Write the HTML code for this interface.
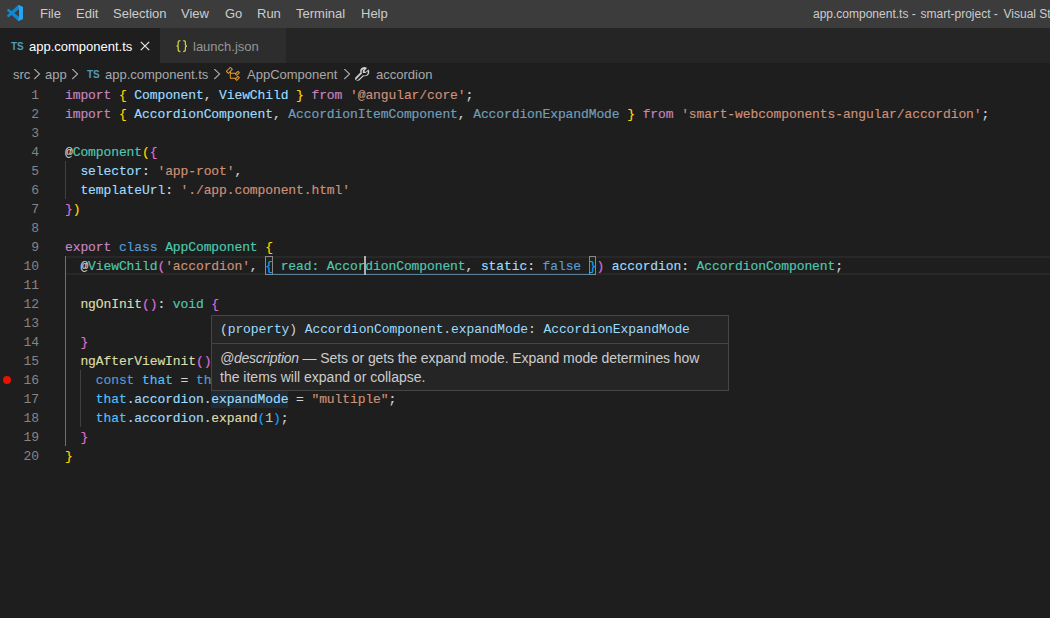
<!DOCTYPE html>
<html><head><meta charset="utf-8">
<style>
*{margin:0;padding:0;box-sizing:border-box}
html,body{width:1050px;height:618px;overflow:hidden;background:#1e1e1e}
body{position:relative;font-family:"Liberation Sans",sans-serif}
#title{position:absolute;left:0;top:0;width:1050px;height:28px;background:#3c3c3c}
.menu{position:absolute;top:0;height:28px;line-height:28px;font-size:13px;color:#cccccc;white-space:pre}
#tabs{position:absolute;left:0;top:28px;width:1050px;height:35px;background:#252526}
#tab1{position:absolute;left:0;top:0;width:160px;height:35px;background:#1e1e1e}
#tab2{position:absolute;left:160px;top:0;width:126px;height:35px;background:#2d2d2d}
.ui{font-size:13px;white-space:pre;position:absolute;line-height:16px}
#crumbs{position:absolute;left:0;top:63px;width:1050px;height:22px}
.ln{position:absolute;left:0;width:39px;text-align:right;font-family:"Liberation Mono",monospace;font-size:13px;color:#858585;height:19px;line-height:19px}
.cl{position:absolute;left:65px;-webkit-text-stroke:0.15px currentColor;font-family:"Liberation Mono",monospace;font-size:13px;letter-spacing:-0.1px;color:#d4d4d4;height:19px;line-height:19px;white-space:pre}
.act{color:#c6c6c6}
.k{color:#c586c0}.b{color:#569cd6}.v{color:#9cdcfe}.t{color:#4ec9b0}.s{color:#ce9178}.f{color:#dcdcaa}
.y{color:#ffd700}.p{color:#da70d6}.u{color:#179fff}.n{color:#b5cea8}.c{color:#4fc1ff}
.vd{color:#9cdcfe;opacity:.67}
.guide{position:absolute;width:1px;background:#404040}
.box{position:absolute}
#hover{position:absolute;left:211px;top:315px;width:518px;height:76px;background:#252526;border:1px solid #454545}
#hover .hd{position:absolute;left:8px;top:0;height:27px;line-height:27px;font-family:"Liberation Mono",monospace;font-size:13px;letter-spacing:-0.1px;color:#d4d4d4;white-space:pre}
#hover .sep{position:absolute;left:0;top:27px;width:516px;height:1px;background:#454545}
#hover .ds{position:absolute;left:8px;top:33px;font-size:14px;line-height:19px;color:#cccccc;white-space:pre}
</style></head>
<body>
<div id="title">
  <svg style="position:absolute;left:7px;top:5px" width="16" height="16" viewBox="0 0 100 100">
    <path fill="#0f87d3" d="M96.46 10.8L75.86.87a6.23 6.23 0 0 0-7.1 1.21L29.35 38.04 12.17 25.01a4.16 4.16 0 0 0-5.32.24L1.34 30.26a4.17 4.17 0 0 0 0 6.16L16.24 50 1.33 63.58a4.17 4.17 0 0 0 0 6.160l5.51 5.01a4.16 4.16 0 0 0 5.32.24l17.19-13.04 39.41 35.96a6.22 6.22 0 0 0 7.1 1.21l20.6-9.93A6.25 6.25 0 0 0 100 83.76V16.24a6.25 6.25 0 0 0-3.54-5.44zM75.010 72.7L45.1 50l29.91-22.7v45.4z"/>
    <path fill="#25a5f0" d="M75.86.87L96.46 10.8A6.25 6.25 0 0 1 100 16.24V83.76A6.25 6.25 0 0 1 96.46 89.2L75.86 99.13A6.22 6.22 0 0 1 70 98.5L75.01 72.7V27.3L70 1.5A6.23 6.23 0 0 1 75.86.87z"/>
  </svg>
  <div class="menu" style="left:40px">File</div>
  <div class="menu" style="left:76px">Edit</div>
  <div class="menu" style="left:113px">Selection</div>
  <div class="menu" style="left:181px">View</div>
  <div class="menu" style="left:225px">Go</div>
  <div class="menu" style="left:257px">Run</div>
  <div class="menu" style="left:296px">Terminal</div>
  <div class="menu" style="left:361px">Help</div>
  <div class="menu" style="left:813px;font-size:12px">app.component.ts -</div><div class="menu" style="left:920.5px;font-size:12px">smart-project -</div><div class="menu" style="left:1003.5px;font-size:12px">Visual Studio Code</div>
</div>
<div id="tabs">
  <div id="tab1">
    <div class="ui" style="left:11px;top:13px;font-size:10px;font-weight:bold;color:#519aba;line-height:12px">TS</div>
    <div class="ui" style="left:29px;top:11px;color:#ffffff">app.component.ts</div>
    <svg style="position:absolute;left:140px;top:13px" width="10" height="10" viewBox="0 0 10 10"><path d="M0.8 0.8L9.2 9.2M9.2 0.8L0.8 9.2" stroke="#e8e8e8" stroke-width="1.2"/></svg>
  </div>
  <div id="tab2">
    <svg style="position:absolute;left:15px;top:11px" width="14" height="14" viewBox="0 0 14 14"><path d="M5.4 1.6 Q3.2 1.6 3.2 3.4 V5.8 Q3.2 7 1.6 7 Q3.2 7 3.2 8.2 V10.8 Q3.2 12.6 5.4 12.6 M8.2 1.6 Q10.4 1.6 10.4 3.4 V5.8 Q10.4 7 12 7 Q10.4 7 10.4 8.2 V10.8 Q10.4 12.6 8.2 12.6" stroke="#cbcb41" stroke-width="1.3" fill="none"/></svg>
    <div class="ui" style="left:33px;top:11px;color:#969696">launch.json</div>
  </div>
</div>
<div id="crumbs">
  <div class="ui" style="left:13px;top:4px;color:#a9a9a9">src</div>
  <svg style="position:absolute;left:33px;top:6px" width="9" height="11" viewBox="0 0 9 11"><path d="M1.3 0L6.6 5L1.3 10" stroke="#a9a9a9" stroke-width="1.1" fill="none"/></svg>
  <div class="ui" style="left:45px;top:4px;color:#a9a9a9">app</div>
  <svg style="position:absolute;left:71px;top:6px" width="9" height="11" viewBox="0 0 9 11"><path d="M1.3 0L6.6 5L1.3 10" stroke="#a9a9a9" stroke-width="1.1" fill="none"/></svg>
  <div class="ui" style="left:87px;top:6px;font-size:10px;font-weight:bold;color:#519aba;line-height:12px">TS</div>
  <div class="ui" style="left:105px;top:4px;color:#a9a9a9">app.component.ts</div>
  <svg style="position:absolute;left:213px;top:6px" width="9" height="11" viewBox="0 0 9 11"><path d="M1.3 0L6.6 5L1.3 10" stroke="#a9a9a9" stroke-width="1.1" fill="none"/></svg>
  <svg style="position:absolute;left:225px;top:3px" width="16" height="16" viewBox="0 0 16 16"><path fill="#ee9d28" d="M11.34 9.71h.71l2.67-2.67v-.71L13.38 5h-.7l-1.82 1.81h-5V5.56l1.86-1.85V3l-2-2H5L1 5v.71l2 2h.71l1.14-1.15v5.79l.5.5H10v.52l1.33 1.34h.71l2.67-2.67v-.71L13.37 10h-.7l-1.86 1.85h-5v-4H10v.48l1.34 1.38zm1.69-3.65l.63.63-2 2-.63-.63 2-2zm0 5l.63.63-2 2-.63-.63 2-2zM3.35 6.65l-1.29-1.3 3.29-3.29 1.3 1.29-3.3 3.3z"/></svg>
  <div class="ui" style="left:247px;top:4px;color:#a9a9a9">AppComponent</div>
  <svg style="position:absolute;left:343px;top:6px" width="9" height="11" viewBox="0 0 9 11"><path d="M1.3 0L6.6 5L1.3 10" stroke="#a9a9a9" stroke-width="1.1" fill="none"/></svg>
  <svg style="position:absolute;left:354.3px;top:2.6px" width="15.4" height="15.4" viewBox="0 0 16 16"><path fill="#d0d0d0" d="M2.807 14.975a1.75 1.75 0 0 1-1.255-.556 1.684 1.684 0 0 1-.544-1.1A1.72 1.72 0 0 1 1.36 12.1c1.208-1.27 3.587-3.65 5.318-5.345a4.257 4.257 0 0 1 .026-3.026 4.034 4.034 0 0 1 1.665-1.94 4.32 4.32 0 0 1 2.511-.7 3.9 3.9 0 0 1 2.207.753l.5.341-2.5 2.578v1.242h1.242l2.563-2.489.337.485a3.762 3.762 0 0 1 .679 2.161 4.266 4.266 0 0 1-.678 2.445 4.04 4.04 0 0 1-1.908 1.626 4.376 4.376 0 0 1-1.654.319 4.19 4.19 0 0 1-1.376-.233c-2.111 2.01-4.4 4.163-5.216 4.88a1.69 1.69 0 0 1-1.055.4zM11.1 3.025a3.223 3.223 0 0 0-1.762.5 2.961 2.961 0 0 0-1.23 1.443 3.233 3.233 0 0 0 .1 2.49l.124.3-.232.226c-1.723 1.684-4.257 4.2-5.513 5.521a.709.709 0 0 0-.2.564.908.908 0 0 0 .278.552c.256.256.818.484 1.1.23.742-.655 2.888-2.665 5.547-5.2l.228-.217.3.127a3.3 3.3 0 0 0 2.529.046 3.04 3.04 0 0 0 1.44-1.221 3.2 3.2 0 0 0 .52-1.82 2.744 2.744 0 0 0-.2-1.072L11.762 7.33H9.094V4.662l2.119-2.185a2.9 2.9 0 0 0-.113-.002z"/></svg>
  <div class="ui" style="left:376px;top:4px;color:#a9a9a9">accordion</div>
</div>
<!-- current line highlight line 10 -->
<div class="box" style="left:65px;top:256px;width:985px;height:19px;border-top:2px solid #282828;border-bottom:2px solid #282828"></div>
<!-- hover highlight expandMode -->
<div class="box" style="left:211px;top:389px;width:77px;height:19px;background:#264f7840"></div>
<!-- indent guides -->
<div class="guide" style="left:65px;top:161px;height:38px"></div>
<div class="guide" style="left:65px;top:256px;height:190px;background:#707070"></div>
<div class="guide" style="left:80px;top:370px;height:57px"></div>
<!-- bracket match boxes -->
<div class="box" style="left:265px;top:256px;width:8px;height:19px;border:1px solid #888888;background:#0064001a"></div>
<div class="box" style="left:589px;top:256px;width:7px;height:19px;border:1px solid #888888;background:#0064001a"></div>
<div class="box" style="left:273px;top:274px;width:316px;height:1px;background:#5b8098"></div>
<!-- breakpoint -->
<div class="box" style="left:2.7px;top:375.7px;width:8.5px;height:8.5px;border-radius:50%;background:#e51400"></div>
<div class="ln" style="top:86px">1</div>
<div class="cl" style="top:86px"><span class="k">import</span> <span class="y">{</span> <span class="v">Component</span>, <span class="v">ViewChild</span> <span class="y">}</span> <span class="k">from</span> <span class="s">&#x27;@angular/core&#x27;</span>;</div>
<div class="ln" style="top:105px">2</div>
<div class="cl" style="top:105px"><span class="k">import</span> <span class="y">{</span> <span class="v">AccordionComponent</span>, <span class="vd">AccordionItemComponent</span>, <span class="vd">AccordionExpandMode</span> <span class="y">}</span> <span class="k">from</span> <span class="s">&#x27;smart-webcomponents-angular/accordion&#x27;</span>;</div>
<div class="ln" style="top:124px">3</div>
<div class="cl" style="top:124px"></div>
<div class="ln" style="top:143px">4</div>
<div class="cl" style="top:143px">@<span class="t">Component</span><span class="y">(</span><span class="p">{</span></div>
<div class="ln" style="top:162px">5</div>
<div class="cl" style="top:162px">  <span class="v">selector</span>: <span class="s">&#x27;app-root&#x27;</span>,</div>
<div class="ln" style="top:181px">6</div>
<div class="cl" style="top:181px">  <span class="v">templateUrl</span>: <span class="s">&#x27;./app.component.html&#x27;</span></div>
<div class="ln" style="top:200px">7</div>
<div class="cl" style="top:200px"><span class="p">}</span><span class="y">)</span></div>
<div class="ln" style="top:219px">8</div>
<div class="cl" style="top:219px"></div>
<div class="ln" style="top:238px">9</div>
<div class="cl" style="top:238px"><span class="k">export</span> <span class="b">class</span> <span class="t">AppComponent</span> <span class="y">{</span></div>
<div class="ln" style="top:257px">10</div>
<div class="cl" style="top:257px">  @<span class="t">ViewChild</span><span class="p">(</span><span class="s">&#x27;accordion&#x27;</span>, <span class="u">{</span> <span class="t">read: AccordionComponent</span>, <span class="v">static</span>: <span class="b">false</span> <span class="u">}</span><span class="p">)</span> <span class="v">accordion</span>: <span class="t">AccordionComponent</span>;</div>
<div class="ln" style="top:276px">11</div>
<div class="cl" style="top:276px"></div>
<div class="ln" style="top:295px">12</div>
<div class="cl" style="top:295px">  <span class="f">ngOnInit</span><span class="p">()</span>: <span class="t">void</span> <span class="p">{</span></div>
<div class="ln" style="top:314px">13</div>
<div class="cl" style="top:314px"></div>
<div class="ln" style="top:333px">14</div>
<div class="cl" style="top:333px">  <span class="p">}</span></div>
<div class="ln" style="top:352px">15</div>
<div class="cl" style="top:352px">  <span class="f">ngAfterViewInit</span><span class="p">()</span> <span class="p">{</span></div>
<div class="ln" style="top:371px">16</div>
<div class="cl" style="top:371px">    <span class="b">const</span> <span class="c">that</span> = <span class="b">this</span>;</div>
<div class="ln" style="top:390px">17</div>
<div class="cl" style="top:390px">    <span class="c">that</span>.<span class="v">accordion</span>.<span class="v">expandMode</span> = <span class="s">&quot;multiple&quot;</span>;</div>
<div class="ln" style="top:409px">18</div>
<div class="cl" style="top:409px">    <span class="c">that</span>.<span class="v">accordion</span>.<span class="f">expand</span><span class="u">(</span><span class="n">1</span><span class="u">)</span>;</div>
<div class="ln" style="top:428px">19</div>
<div class="cl" style="top:428px">  <span class="p">}</span></div>
<div class="ln" style="top:447px">20</div>
<div class="cl" style="top:447px"><span class="y">}</span></div>
<!-- cursor -->
<div class="box" style="left:364px;top:256px;width:2px;height:19px;background:#aeafad"></div>
<div id="hover">
  <div class="hd">(<span class="v">property</span>) <span class="v">AccordionComponent</span>.<span class="v">expandMode</span>: <span class="v">AccordionExpandMode</span></div>
  <div class="sep"></div>
  <div class="ds"><i style="letter-spacing:-0.26px">@description</i><span style="letter-spacing:-0.085px"> — Sets or gets the expand mode. Expand mode determines how</span>
the items will expand or collapse.</div>
</div>
</body></html>
